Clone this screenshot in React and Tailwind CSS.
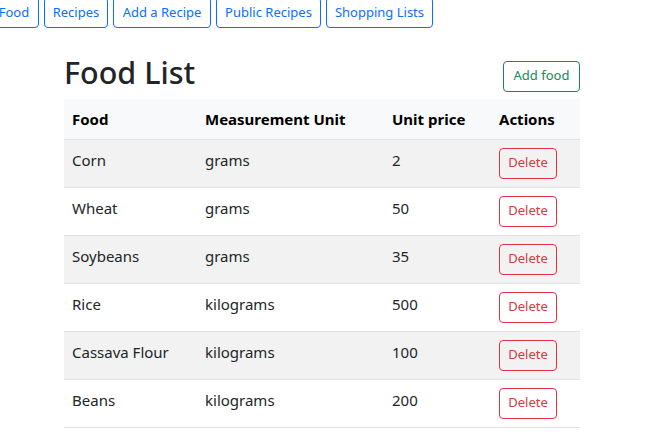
import React from "react";

const rows = [
  ["Corn", "grams", "2"],
  ["Wheat", "grams", "50"],
  ["Soybeans", "grams", "35"],
  ["Rice", "kilograms", "500"],
  ["Cassava Flour", "kilograms", "100"],
  ["Beans", "kilograms", "200"],
];

const navItems = [
  ["Food", "w-[50px]"],
  ["Recipes", "w-[64px]"],
  ["Add a Recipe", "w-[98px]"],
  ["Public Recipes", "w-[105px]"],
  ["Shopping Lists", "w-[107px]"],
];

export default function App() {
  return (
    <div className="min-h-[436px] bg-white text-[#212529] font-['Segoe_UI','Noto_Sans',sans-serif] overflow-hidden">
      <div className="flex gap-[5px] -ml-[11px] -mt-[3px]">
        {navItems.map(([t, w]) => (
          <button
            key={t}
            className={`${w} h-[31px] shrink-0 border border-[#0d6efd] rounded-[4px] text-[#0d6efd] text-[13px] leading-[21px] flex items-center justify-center whitespace-nowrap`}
          >
            {t}
          </button>
        ))}
      </div>
      <div className="ml-[64px] w-[516px] mt-[25px]">
        <div className="flex items-center justify-between">
          <h1 className="text-[30.5px] leading-[38px] h-[38px] mb-[8px] font-medium">Food List</h1>
          <button className="w-[77px] h-[31px] border border-[#198754] rounded-[4px] text-[#198754] text-[13px] flex items-center justify-center">
            Add food
          </button>
        </div>
        <table className="w-[516px] border-collapse text-[15px] table-fixed">
          <colgroup>
            <col className="w-[133px]" />
            <col className="w-[187px]" />
            <col className="w-[107px]" />
            <col className="w-[89px]" />
          </colgroup>
          <thead>
            <tr className="bg-[#f8f9fa] border-b border-[#dee2e6]">
              <th className="text-left font-bold px-[8px] h-[40px] leading-[24px] text-black">Food</th>
              <th className="text-left font-bold px-[8px] leading-[24px] text-black">Measurement Unit</th>
              <th className="text-left font-bold px-[8px] leading-[24px] text-black">Unit price</th>
              <th className="text-left font-bold px-[8px] leading-[24px] text-black">Actions</th>
            </tr>
          </thead>
          <tbody>
            {rows.map((r, i) => (
              <tr key={r[0]} className={`border-b border-[#dee2e6] ${i % 2 === 0 ? "bg-[#f2f2f2]" : "bg-white"}`}>
                <td className="px-[8px] pt-[8px] pb-[15px] align-top leading-[24px] h-[47px]">{r[0]}</td>
                <td className="px-[8px] pt-[8px] align-top leading-[24px] text-[#212529]">{r[1]}</td>
                <td className="px-[8px] pt-[8px] align-top leading-[24px]">{r[2]}</td>
                <td className="px-[8px] pt-[8px] align-top">
                  <button className="w-[58px] h-[31px] border border-[#dc3545] rounded-[4px] text-[#dc3545] text-[13px] flex items-center justify-center">
                    Delete
                  </button>
                </td>
              </tr>
            ))}
          </tbody>
        </table>
      </div>
    </div>
  );
}
